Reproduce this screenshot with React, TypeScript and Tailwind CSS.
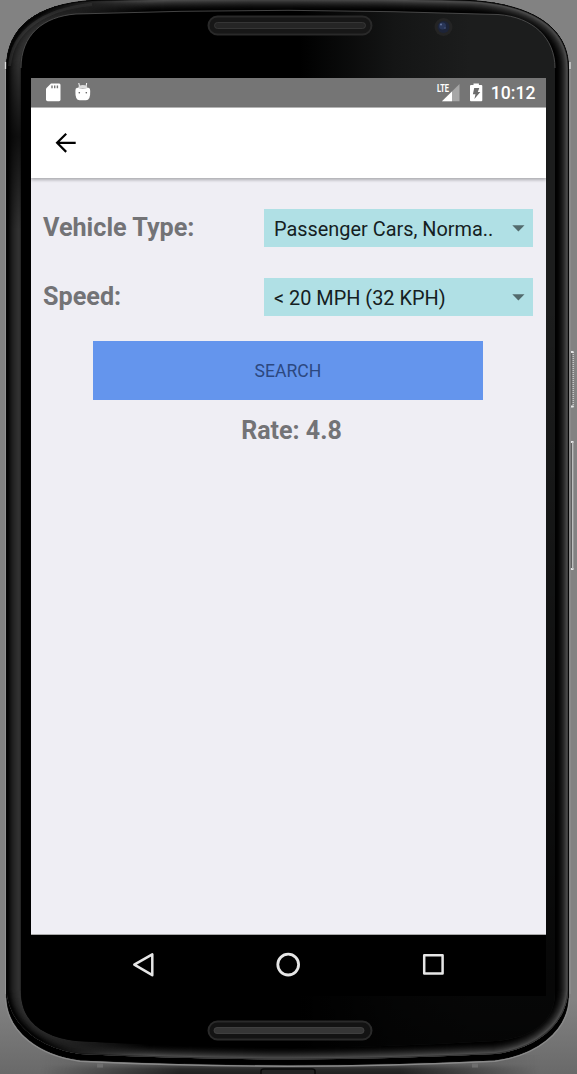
import React from "react";

const OUTER =
  "M6.5 68 C6.5 26 38 4 92 0.5 Q190 -3 288 -3 Q385 -3 470 0.5 C530 4 568.5 26 568.5 68 V996 C568.5 1032 535 1055 495 1060 Q390 1065 288 1065 Q185 1065 80 1060 C40 1055 6.5 1032 6.5 996 Z";
const RIM =
  "M6.5 68 C6.5 26 38 4 92 0.5 Q190 -2 288 -2 Q385 -2 470 0.5 C530 4 568.5 26 568.5 68 V990 C566 1026 535 1049 495 1054 Q390 1059 288 1059.5 Q185 1059 80 1054 C40 1048 9 1026 6.5 990 Z";
const INNER =
  "M21 68 C21 35 43 16.5 76 14 Q180 10.5 288 10.3 Q395 11 498 14.5 C533 17 555 38 555 68 V992 C555 1022 532 1038 495 1041 Q390 1047 288 1048 Q180 1047 76 1041 C43 1037 21 1022 21 992 Z";

const brightEdge: [number, string][] = [
  [14, "#000000"], [12, "#020202"], [11, "#050505"], [10, "#090909"], [9, "#0e0e0e"], [8, "#141414"],
  [7, "#1b1b1b"], [6, "#232323"], [5, "#2b2b2b"], [4, "#353535"], [3, "#404040"], [2, "#4b4b4b"], [1, "#343434"],
];
const darkEdge: [number, string][] = [
  [15, "#202020"], [14, "#2c2c2c"], [13, "#323232"], [12, "#303030"], [11, "#2e2e2e"], [10, "#2b2b2b"], [9, "#282828"],
  [8, "#252525"], [7, "#212121"], [6, "#1c1c1c"], [5, "#161616"], [4, "#101010"], [3, "#0a0a0a"], [2, "#040404"],
];

function PhoneFrame() {
  return (
    <svg className="absolute inset-0" width="577" height="1074" viewBox="0 0 577 1074" aria-hidden="true">
      <defs>
        <linearGradient id="shade" x1="0" x2="0" y1="60" y2="230" gradientUnits="userSpaceOnUse">
          <stop offset="0" stopColor="#000" stopOpacity="0" />
          <stop offset=".45" stopColor="#000" stopOpacity=".7" />
          <stop offset="1" stopColor="#000" stopOpacity="0" />
        </linearGradient>
        <linearGradient id="faceTop" x1="300" x2="470" y1="0" y2="0" gradientUnits="userSpaceOnUse">
          <stop offset="0" stopColor="#000" />
          <stop offset=".55" stopColor="#141515" />
          <stop offset="1" stopColor="#1c1d1d" />
        </linearGradient>
        <linearGradient id="faceFade" x1="0" x2="0" y1="300" y2="1040" gradientUnits="userSpaceOnUse">
          <stop offset="0" stopColor="#000" stopOpacity="0" />
          <stop offset="1" stopColor="#000" stopOpacity=".82" />
        </linearGradient>
        <linearGradient id="back" x1="0" x2="0" y1="1000" y2="1074" gradientUnits="userSpaceOnUse">
          <stop offset="0" stopColor="#444" stopOpacity="0" />
          <stop offset="1" stopColor="#444" stopOpacity=".4" />
        </linearGradient>
        <linearGradient id="under" x1="0" x2="0" y1="1064" y2="1074" gradientUnits="userSpaceOnUse">
          <stop offset="0" stopColor="#565656" />
          <stop offset=".5" stopColor="#292929" />
          <stop offset="1" stopColor="#202020" />
        </linearGradient>
        <linearGradient id="underMask" x1="40" x2="540" y1="0" y2="0" gradientUnits="userSpaceOnUse">
          <stop offset="0" stopColor="#000" />
          <stop offset=".28" stopColor="#fff" />
          <stop offset=".72" stopColor="#fff" />
          <stop offset="1" stopColor="#000" />
        </linearGradient>
        <linearGradient id="leftMask" x1="40" x2="150" y1="0" y2="0" gradientUnits="userSpaceOnUse">
          <stop offset="0" stopColor="#fff" />
          <stop offset="1" stopColor="#000" />
        </linearGradient>
        <mask id="m" maskUnits="userSpaceOnUse" x="0" y="1040" width="577" height="34"><rect x="0" y="1040" width="577" height="34" fill="url(#underMask)" /></mask>
        <mask id="lm" maskUnits="userSpaceOnUse" x="0" y="0" width="577" height="1074"><rect width="577" height="1074" fill="url(#leftMask)" /></mask>
        <clipPath id="rim"><path d={RIM} /></clipPath>
      </defs>

      <rect width="577" height="1074" fill="#828282" />
      <rect y="1000" width="577" height="74" fill="url(#back)" />
      <rect y="1055" width="577" height="19" fill="url(#under)" mask="url(#m)" />

      <path d={OUTER} fill="#000" />
      <g clipPath="url(#rim)" fill="none">
        {brightEdge.map(([d, c]) => <path key={d} d={RIM} stroke={c} strokeWidth={d * 2} />)}
        <g mask="url(#lm)">
          {darkEdge.map(([d, c]) => <path key={d} d={RIM} stroke={c} strokeWidth={d * 2} />)}
          <path d="M9.5 66 C12 32 42 9 92 4.5" stroke="#555" strokeWidth="3" opacity=".3" />
        </g>
      </g>
      <rect x="7" y="60" width="14" height="170" fill="url(#shade)" />

      <path d={INNER} fill="url(#faceTop)" />
      <path d={INNER} fill="url(#faceFade)" />
      <path d="M21 68 C21 35 43 16.5 76 14 Q180 10.5 288 10.3 Q395 11 498 14.5 C533 17 555 38 555 68" fill="none" stroke="#555" strokeWidth=".8" />
      <path d={OUTER} fill="none" stroke="#050505" strokeWidth="1" />
      <path d="M5.5 70V994M570 70V994" stroke="#939393" strokeWidth="1" />
      <path d="M5.5 62V69M570 62V69" stroke="#ddd" strokeWidth="1.3" />
      <path d="M5.5 998 C7 1033 40 1056 80 1061.2 Q185 1066.2 288 1066.2 Q390 1066.2 495 1061.2 C535 1056 568 1033 569.5 998" fill="none" stroke="#8a8a8a" strokeWidth="1.4" />
      <rect x="97" y="1063.5" width="6" height="4" fill="#6e6e6e" />
      <rect x="472" y="1063.5" width="6" height="4" fill="#6e6e6e" />
      <path d="M261 1074V1071Q261 1069 264 1069H312Q315 1069 315 1071V1074" fill="#242424" stroke="#080808" strokeWidth="1.5" />

      <rect x="208.5" y="16.5" width="163" height="18" rx="9" fill="#171717" stroke="#292929" strokeWidth="2" />
      <rect x="214.5" y="22.5" width="151" height="6" rx="3" fill="#252525" stroke="#3b3b3b" strokeWidth=".8" />
      <rect x="208.5" y="1021.5" width="163" height="18" rx="9" fill="#131313" stroke="#2a2a2a" strokeWidth="2" />
      <rect x="214" y="1027.5" width="150" height="6" rx="3" fill="#363636" stroke="#464646" strokeWidth=".8" />

      <circle cx="443.5" cy="27" r="9" fill="#242424" />
      <circle cx="443.5" cy="27" r="6" fill="#1d2438" />
      <circle cx="442.5" cy="26" r="3.5" fill="#293658" />
      <circle cx="441" cy="24.5" r="1" fill="#65749c" />
      <circle cx="445" cy="28" r=".8" fill="#4d5b84" />

      <path d="M571.5 352V407" stroke="#666" strokeWidth="1.5" />
      <path d="M573.3 352V407" stroke="#c4c4c4" strokeWidth="1.5" strokeDasharray="1 1" />
      <path d="M571 352H573.5M571 406.5H573.5M571 442H573.5M571 569H573.5" stroke="#e4e4e4" strokeWidth="2" />
      <path d="M571.3 443V568" stroke="#555" />
      <path d="M572.7 442V569" stroke="#c0c0c0" strokeWidth="1.3" />
    </svg>
  );
}

function StatusBar() {
  return (
    <div className="flex h-[29px] items-center bg-[#757575] pl-[15px] pr-[10.5px] text-white">
      <svg width="15" height="19" viewBox="0 0 15 19">
        <path d="M5 .5H13.2Q14.5.5 14.5 2V16.5Q14.5 18.3 13 18.3H1.7Q0 18.3 0 16.5V5.5Z" fill="#fff" />
        <path d="M6 2.5V5.2M8.7 2.5V5.2M11.4 2.5V5.2" stroke="#757575" strokeWidth="1.4" />
      </svg>
      <svg width="16" height="18" viewBox="0 0 16 18" className="-mt-[2px] ml-[14px]">
        <path d="M3.8 0L4.6 4M11.7 0L10.9 4" stroke="#fff" strokeWidth="1" />
        <path d="M3 5Q3.4 2 7.8 2Q12.2 2 12.6 5Z" fill="#ddd" />
        <path d="M2 4.7Q7.8 6.3 13.6 4.7Q15.4 5.2 15.2 8Q15.6 17.3 11 17.3H4.6Q0 17.3.4 8Q.2 5.2 2 4.7Z" fill="#fff" />
        <circle cx="4.3" cy="9.7" r=".8" fill="#555" /><circle cx="11.3" cy="9.7" r=".8" fill="#555" />
      </svg>
      <div className="ml-auto flex items-center">
        <svg className="-mt-[3px] overflow-visible" width="23" height="21" viewBox="0 -2 23 21">
          <path d="M22.5 1V18.3H5Z" fill="#a7a7a7" />
          <path d="M15 8.4V18.3H5Z" fill="#fff" />
          <rect x="0" y="0" width="12.5" height="9.5" fill="#757575" />
          <text x="0" y="9" fontFamily="Roboto" fontSize="11.5" fontWeight="700" fill="#fff" textLength="12" lengthAdjust="spacingAndGlyphs">LTE</text>
        </svg>
        <svg className="-mt-px ml-[10px]" width="13" height="19" viewBox="0 0 13 19">
          <path d="M3.5 2V.5H8.9V2H11.3Q12.3 2 12.3 3V17.3Q12.3 18.3 11.3 18.3H1Q0 18.3 0 17.3V3Q0 2 1 2Z" fill="#fff" />
          <path d="M4.2 5H9.3L7.8 8.9H10.3L4.4 16L5.5 11.3H2.9Z" fill="#6c6c6c" />
        </svg>
        <span className="mt-px ml-[8px] text-[17.6px] leading-5 font-medium">10:12</span>
      </div>
    </div>
  );
}

function SelectField({ label, value }: { label: string; value: string }) {
  return (
    <div className="flex h-[38px] items-center justify-between pr-[13px] pl-3">
      <label className="text-[25.2px] leading-[30px] font-bold text-[#737376]">{label}</label>
      <button className="flex h-[37.5px] w-[269.5px] items-center justify-between bg-[#b0e0e5] pr-[8.5px] pl-[10.5px] text-[19.9px] text-[#152022]">
        <span className="mt-[3px] whitespace-nowrap">{value}</span>
        <svg width="13" height="7" viewBox="0 0 13 7"><path d="M.3.2H12.5L6.4 6.5Z" fill="#536b6d" /></svg>
      </button>
    </div>
  );
}

function NavigationBar() {
  return (
    <nav className="flex h-[61px] items-center bg-black pb-px pl-[100px]">
      <svg width="26" height="26" viewBox="0 0 26 26" fill="none" stroke="#e6e6e6" strokeWidth="2.5" strokeLinejoin="round">
        <path d="M3.3 12.7L21.3 2.3V23.2Z" />
      </svg>
      <svg className="ml-[118px]" width="26" height="26" viewBox="0 0 26 26" fill="none" stroke="#e6e6e6" strokeWidth="2.8">
        <circle cx="13.2" cy="12.6" r="10.4" />
      </svg>
      <svg className="ml-[121px]" width="26" height="26" viewBox="0 0 26 26" fill="none" stroke="#e6e6e6" strokeWidth="2.5" strokeLinejoin="round">
        <rect x="2.2" y="3.2" width="18.4" height="18.4" />
      </svg>
    </nav>
  );
}

export default function App() {
  return (
    <div className="relative h-[1074px] w-[577px] overflow-hidden bg-[#828282] pt-[78px] pl-[31px] font-['Roboto',sans-serif]">
      <PhoneFrame />
      <div className="relative flex h-[918px] w-[515px] flex-col">
        <StatusBar />
        <main className="flex min-h-0 flex-1 flex-col border-b border-[#a9a9a9] bg-[#efeef4]">
          <header className="flex h-[71px] shrink-0 items-center border-t border-[#b5b5b5] bg-white pl-[24px] shadow-[0_2px_3px_rgba(0,0,0,0.28)]">
            <button aria-label="Back">
              <svg width="22" height="22" viewBox="0 0 22 22" fill="none" stroke="#000" strokeWidth="2.2"><path d="M20.7 10.8H2.5M11.2 1.7L2.1 10.8L11.2 19.9" /></svg>
            </button>
          </header>
          <section className="flex flex-col pt-[31px]">
            <SelectField label="Vehicle Type:" value="Passenger Cars, Norma.." />
            <div className="mt-[31px]"><SelectField label="Speed:" value="< 20 MPH (32 KPH)" /></div>
            <button className="mt-[25px] ml-[62px] h-[59px] w-[390px] bg-[#6495ed] pt-px text-[17.6px] text-[#2c4880]">SEARCH</button>
            <p className="mt-[16px] pl-[6px] text-center text-[25px] leading-[30px] font-bold text-[#737376]">Rate: 4.8</p>
          </section>
        </main>
        <NavigationBar />
      </div>
    </div>
  );
}
